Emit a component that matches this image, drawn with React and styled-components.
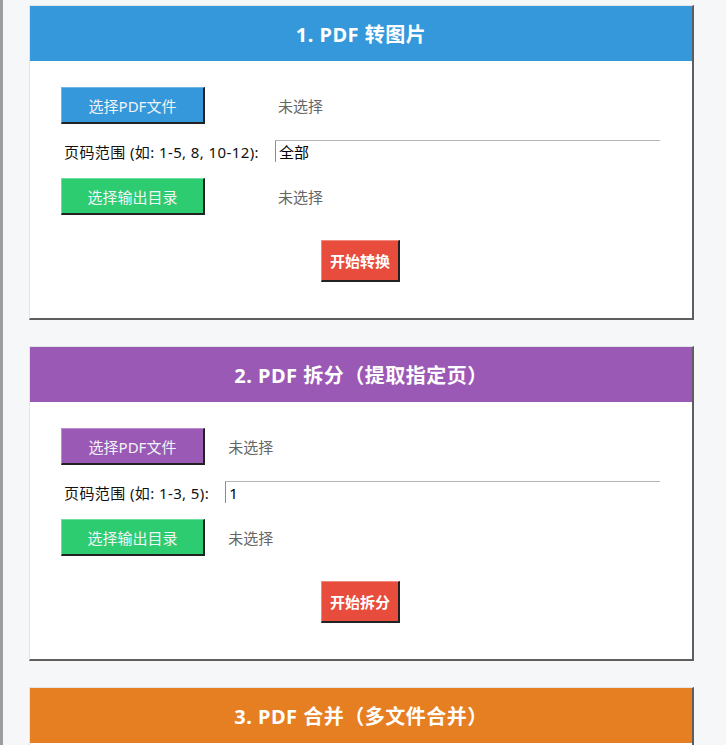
import React from 'react';
import styled, { createGlobalStyle } from 'styled-components';

const GlobalStyle = createGlobalStyle`
  html, body {
    margin: 0;
    padding: 0;
    height: 100%;
    overflow: hidden;
    background: #f6f7f9;
  }
  body {
    font-family: "Noto Sans", "Noto Sans CJK SC", sans-serif;
  }
`;

const Page = styled.div`
  min-height: 100vh;
  box-sizing: border-box;
  border-left: 3px solid #9d9d9d;
  padding: 5px 0 0 26px;
  display: flex;
  flex-direction: column;
  gap: 26px;
`;

const Card = styled.section`
  width: 665px;
  box-sizing: border-box;
  background: #fff;
  border-top: 1px solid #e2e4e8;
  border-left: 1px solid #e2e4e8;
  border-right: 2px solid #5e5e5e;
  border-bottom: 2px solid #5e5e5e;
`;

const Header = styled.div`
  height: 55px;
  background: ${(p) => p.$color};
  color: #fff;
  display: flex;
  align-items: center;
  justify-content: center;
  font-size: 20px;
  font-weight: 700;
  letter-spacing: 0.5px;
`;

const Body = styled.div`
  padding: 26px 32px 36px 31px;
`;

const Grid = styled.div`
  display: grid;
  grid-template-columns: auto 1fr;
  column-gap: 16px;
  row-gap: 16px;
  align-items: center;
`;

const TkButton = styled.button`
  width: 144px;
  height: 37px;
  box-sizing: border-box;
  padding: 0;
  background: ${(p) => p.$color};
  color: #f1f4f7;
  font-family: inherit;
  font-size: 15px;
  border-style: solid;
  border-width: 1px 2px 2px 1px;
  border-color: ${(p) => p.$light} #222 #222 ${(p) => p.$light};
  cursor: pointer;
`;

const Status = styled.span`
  color: #666;
  font-size: 15px;
  padding-left: 3px;
`;

const FieldLabel = styled.label`
  color: #111;
  font-size: 15px;
  letter-spacing: 0.4px;
  padding-left: 3px;
  white-space: nowrap;
`;

const Entry = styled.input`
  height: 22px;
  box-sizing: border-box;
  border-style: solid;
  border-width: 1px 0 0 1px;
  border-color: #b4b4b4 #fff #fff #8c8c8c;
  padding: 0 0 0 3px;
  font-family: inherit;
  font-size: 15px;
  color: #000;
  outline: none;
  background: #fff;
`;

const Actions = styled.div`
  display: flex;
  justify-content: center;
  margin-top: 25px;
`;

const StartButton = styled.button`
  height: 42px;
  box-sizing: border-box;
  padding: 0 8px;
  background: #e74c3c;
  color: #fff;
  font-family: inherit;
  font-size: 15px;
  font-weight: 700;
  border-style: solid;
  border-width: 1px 2px 2px 1px;
  border-color: #f08a7f #222 #222 #f08a7f;
  cursor: pointer;
`;

const tools = [
  {
    title: '1. PDF 转图片',
    color: '#3498db',
    light: '#6fb6e6',
    pick: '选择PDF文件',
    rangeLabel: '页码范围 (如: 1-5, 8, 10-12):',
    range: '全部',
    action: '开始转换',
  },
  {
    title: '2. PDF 拆分（提取指定页）',
    color: '#9b59b6',
    light: '#bb8ccf',
    pick: '选择PDF文件',
    rangeLabel: '页码范围 (如: 1-3, 5):',
    range: '1',
    action: '开始拆分',
  },
  {
    title: '3. PDF 合并（多文件合并）',
    color: '#e67e22',
    light: '#f0a765',
    pick: '选择PDF文件',
    action: '开始合并',
  },
];

function ToolCard({ tool }) {
  return (
    <Card>
      <Header $color={tool.color}>{tool.title}</Header>
      <Body>
        <Grid>
          <TkButton $color={tool.color} $light={tool.light}>{tool.pick}</TkButton>
          <Status>未选择</Status>
          {tool.rangeLabel && (
            <>
              <FieldLabel>{tool.rangeLabel}</FieldLabel>
              <Entry defaultValue={tool.range} />
            </>
          )}
          <TkButton $color="#2ecc71" $light="#6ee09d">选择输出目录</TkButton>
          <Status>未选择</Status>
        </Grid>
        <Actions>
          <StartButton>{tool.action}</StartButton>
        </Actions>
      </Body>
    </Card>
  );
}

export default function App() {
  return (
    <>
      <GlobalStyle />
      <Page>
        {tools.map((tool) => (
          <ToolCard key={tool.title} tool={tool} />
        ))}
      </Page>
    </>
  );
}
